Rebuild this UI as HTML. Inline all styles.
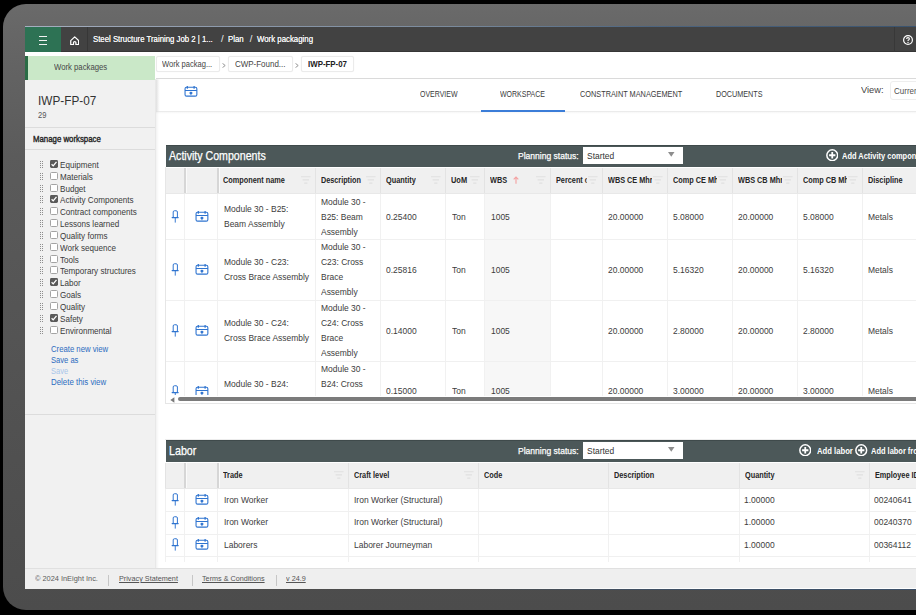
<!DOCTYPE html>
<html><head><meta charset="utf-8"><style>
html,body{margin:0;padding:0;width:916px;height:615px;overflow:hidden;background:#000;}
body{position:relative;font-family:"Liberation Sans", sans-serif;}
.t{position:absolute;white-space:nowrap;transform-origin:0 0;}
.b{position:absolute;}
</style></head><body>
<div class="b" style="left:0;top:0;width:916px;height:615px;overflow:hidden">
<div class="b" style="left:3.00px;top:4.00px;width:1000.00px;height:606.00px;border-radius:23px;background:linear-gradient(#6a6a6a 0%,#666666 5%,#5b5b5b 25%,#555555 50%,#505050 75%,#4c4c4c 100%);"></div>
<div class="b" style="left:25.00px;top:26.00px;width:900.00px;height:563.00px;background:#ffffff;"></div>
<div class="b" style="left:25.00px;top:26.00px;width:891.00px;height:1.00px;background:linear-gradient(90deg,#a6afc0 0%,#8f9cae 20%,#7a8a9c 48%,#4d6580 70%,#3a536e 100%);"></div>
<div class="b" style="left:25.00px;top:27.00px;width:900.00px;height:25.00px;background:#424242;"></div>
<div class="b" style="left:25.00px;top:51.00px;width:900.00px;height:1.00px;background:#363636;"></div>
<div class="b" style="left:25.00px;top:27.00px;width:36.20px;height:25.00px;background:#2d7254;"></div>
<div class="b" style="left:87.00px;top:27.00px;width:1.00px;height:25.00px;background:#373737;"></div>
<div class="b" style="left:894.30px;top:27.00px;width:1.00px;height:25.00px;background:#383838;"></div>
<div class="b" style="left:38.60px;top:36.10px;width:8.80px;height:1.30px;background:#f2f2f2;"></div>
<div class="b" style="left:38.60px;top:39.90px;width:8.80px;height:1.30px;background:#f2f2f2;"></div>
<div class="b" style="left:38.60px;top:43.70px;width:8.80px;height:1.30px;background:#f2f2f2;"></div>
<svg class="b" style="left:69.8px;top:35.6px" width="9.4" height="9.4" viewBox="0 0 9.4 9.4"><path d="M0.75 4.6 L4.7 0.85 L8.65 4.6 V8.7 H5.9 V6.6 Q5.9 5.6 4.7 5.6 Q3.5 5.6 3.5 6.6 V8.7 H0.75 Z" fill="none" stroke="#fff" stroke-width="1.25" stroke-linejoin="round"/></svg>
<svg class="b" style="left:902.5px;top:35.1px" width="10" height="10" viewBox="0 0 10 10"><circle cx="5" cy="5" r="4.4" fill="none" stroke="#fff" stroke-width="1.2"/><path d="M3.6 4.0 Q3.6 2.6 5.0 2.6 Q6.4 2.6 6.4 3.8 Q6.4 4.6 5.5 5.0 Q5.0 5.3 5.0 6.0" fill="none" stroke="#fff" stroke-width="1.1"/><circle cx="5" cy="7.4" r="0.65" fill="#fff"/></svg>
<div class="t" style="left:92.90px;top:33px;font-size:9.4px;line-height:12.22px;color:#f3f3f3;font-weight:normal;transform:scaleX(0.8306);text-shadow:0 0 0.3px #fff;">Steel Structure Training Job 2 | 1...</div>
<div class="t" style="left:221.00px;top:33px;font-size:9.4px;line-height:12.22px;color:#f3f3f3;font-weight:normal;">/</div>
<div class="t" style="left:227.80px;top:33px;font-size:9.4px;line-height:12.22px;color:#f3f3f3;font-weight:normal;transform:scaleX(0.8367);text-shadow:0 0 0.3px #fff;">Plan</div>
<div class="t" style="left:249.80px;top:33px;font-size:9.4px;line-height:12.22px;color:#f3f3f3;font-weight:normal;">/</div>
<div class="t" style="left:257.40px;top:33px;font-size:9.4px;line-height:12.22px;color:#f3f3f3;font-weight:normal;transform:scaleX(0.8352);text-shadow:0 0 0.3px #fff;">Work packaging</div>
<div class="b" style="left:25.00px;top:80.00px;width:130.00px;height:488.00px;background:#f1f1f1;"></div>
<div class="b" style="left:25.00px;top:55.80px;width:130.00px;height:24.20px;background:#cae8c8;"></div>
<div class="b" style="left:25.00px;top:55.80px;width:2.60px;height:24.20px;background:#2a6c45;"></div>
<div class="t" style="left:53.60px;top:62px;font-size:8.8px;line-height:11.44px;color:#474747;font-weight:normal;transform:scaleX(0.8798);">Work packages</div>
<div class="t" style="left:37.70px;top:93px;font-size:12.4px;line-height:16.12px;color:#333;font-weight:normal;transform:scaleX(0.9515);">IWP-FP-07</div>
<div class="t" style="left:37.80px;top:111px;font-size:8.2px;line-height:10.66px;color:#555;font-weight:normal;transform:scaleX(0.9200);">29</div>
<div class="b" style="left:25.00px;top:126.80px;width:130.00px;height:1.00px;background:#dcdcdc;"></div>
<div class="t" style="left:32.80px;top:134px;font-size:8.8px;line-height:11.44px;color:#222;font-weight:normal;transform:scaleX(0.8888);-webkit-text-stroke:0.35px #222;">Manage workspace</div>
<div class="b" style="left:25.00px;top:148.80px;width:130.00px;height:1.00px;background:#dcdcdc;"></div>
<div class="b" style="left:40.00px;top:161.00px;width:1.00px;height:1.00px;background:#8e8e8e;"></div>
<div class="b" style="left:42.00px;top:161.00px;width:1.00px;height:1.00px;background:#8e8e8e;"></div>
<div class="b" style="left:40.00px;top:163.00px;width:1.00px;height:1.00px;background:#8e8e8e;"></div>
<div class="b" style="left:42.00px;top:163.00px;width:1.00px;height:1.00px;background:#8e8e8e;"></div>
<div class="b" style="left:40.00px;top:165.00px;width:1.00px;height:1.00px;background:#8e8e8e;"></div>
<div class="b" style="left:42.00px;top:165.00px;width:1.00px;height:1.00px;background:#8e8e8e;"></div>
<div class="b" style="left:40.00px;top:167.00px;width:1.00px;height:1.00px;background:#8e8e8e;"></div>
<div class="b" style="left:42.00px;top:167.00px;width:1.00px;height:1.00px;background:#8e8e8e;"></div>
<svg class="b" style="left:49.6px;top:160.00px" width="8" height="8" viewBox="0 0 8 8"><rect x="0" y="0" width="8" height="8" rx="1.4" fill="#595959"/><path d="M1.6 4.3 L3.2 5.9 L6.5 1.9" fill="none" stroke="#fff" stroke-width="1.3"/></svg>
<div class="t" style="left:60.00px;top:160px;font-size:8.7px;line-height:11.31px;color:#3a3a3a;font-weight:normal;transform:scaleX(0.9300);">Equipment</div>
<div class="b" style="left:40.00px;top:172.83px;width:1.00px;height:1.00px;background:#8e8e8e;"></div>
<div class="b" style="left:42.00px;top:172.83px;width:1.00px;height:1.00px;background:#8e8e8e;"></div>
<div class="b" style="left:40.00px;top:174.83px;width:1.00px;height:1.00px;background:#8e8e8e;"></div>
<div class="b" style="left:42.00px;top:174.83px;width:1.00px;height:1.00px;background:#8e8e8e;"></div>
<div class="b" style="left:40.00px;top:176.83px;width:1.00px;height:1.00px;background:#8e8e8e;"></div>
<div class="b" style="left:42.00px;top:176.83px;width:1.00px;height:1.00px;background:#8e8e8e;"></div>
<div class="b" style="left:40.00px;top:178.83px;width:1.00px;height:1.00px;background:#8e8e8e;"></div>
<div class="b" style="left:42.00px;top:178.83px;width:1.00px;height:1.00px;background:#8e8e8e;"></div>
<div class="b" style="left:49.60px;top:171.83px;width:8.00px;height:8.00px;box-sizing:border-box;border:1px solid #a3a3a3;border-radius:1.5px;background:#fff;"></div>
<div class="t" style="left:60.00px;top:172px;font-size:8.7px;line-height:11.31px;color:#3a3a3a;font-weight:normal;transform:scaleX(0.9300);">Materials</div>
<div class="b" style="left:40.00px;top:184.66px;width:1.00px;height:1.00px;background:#8e8e8e;"></div>
<div class="b" style="left:42.00px;top:184.66px;width:1.00px;height:1.00px;background:#8e8e8e;"></div>
<div class="b" style="left:40.00px;top:186.66px;width:1.00px;height:1.00px;background:#8e8e8e;"></div>
<div class="b" style="left:42.00px;top:186.66px;width:1.00px;height:1.00px;background:#8e8e8e;"></div>
<div class="b" style="left:40.00px;top:188.66px;width:1.00px;height:1.00px;background:#8e8e8e;"></div>
<div class="b" style="left:42.00px;top:188.66px;width:1.00px;height:1.00px;background:#8e8e8e;"></div>
<div class="b" style="left:40.00px;top:190.66px;width:1.00px;height:1.00px;background:#8e8e8e;"></div>
<div class="b" style="left:42.00px;top:190.66px;width:1.00px;height:1.00px;background:#8e8e8e;"></div>
<div class="b" style="left:49.60px;top:183.66px;width:8.00px;height:8.00px;box-sizing:border-box;border:1px solid #a3a3a3;border-radius:1.5px;background:#fff;"></div>
<div class="t" style="left:60.00px;top:184px;font-size:8.7px;line-height:11.31px;color:#3a3a3a;font-weight:normal;transform:scaleX(0.9300);">Budget</div>
<div class="b" style="left:40.00px;top:196.49px;width:1.00px;height:1.00px;background:#8e8e8e;"></div>
<div class="b" style="left:42.00px;top:196.49px;width:1.00px;height:1.00px;background:#8e8e8e;"></div>
<div class="b" style="left:40.00px;top:198.49px;width:1.00px;height:1.00px;background:#8e8e8e;"></div>
<div class="b" style="left:42.00px;top:198.49px;width:1.00px;height:1.00px;background:#8e8e8e;"></div>
<div class="b" style="left:40.00px;top:200.49px;width:1.00px;height:1.00px;background:#8e8e8e;"></div>
<div class="b" style="left:42.00px;top:200.49px;width:1.00px;height:1.00px;background:#8e8e8e;"></div>
<div class="b" style="left:40.00px;top:202.49px;width:1.00px;height:1.00px;background:#8e8e8e;"></div>
<div class="b" style="left:42.00px;top:202.49px;width:1.00px;height:1.00px;background:#8e8e8e;"></div>
<svg class="b" style="left:49.6px;top:195.49px" width="8" height="8" viewBox="0 0 8 8"><rect x="0" y="0" width="8" height="8" rx="1.4" fill="#595959"/><path d="M1.6 4.3 L3.2 5.9 L6.5 1.9" fill="none" stroke="#fff" stroke-width="1.3"/></svg>
<div class="t" style="left:60.00px;top:195px;font-size:8.7px;line-height:11.31px;color:#3a3a3a;font-weight:normal;transform:scaleX(0.9300);">Activity Components</div>
<div class="b" style="left:40.00px;top:208.32px;width:1.00px;height:1.00px;background:#8e8e8e;"></div>
<div class="b" style="left:42.00px;top:208.32px;width:1.00px;height:1.00px;background:#8e8e8e;"></div>
<div class="b" style="left:40.00px;top:210.32px;width:1.00px;height:1.00px;background:#8e8e8e;"></div>
<div class="b" style="left:42.00px;top:210.32px;width:1.00px;height:1.00px;background:#8e8e8e;"></div>
<div class="b" style="left:40.00px;top:212.32px;width:1.00px;height:1.00px;background:#8e8e8e;"></div>
<div class="b" style="left:42.00px;top:212.32px;width:1.00px;height:1.00px;background:#8e8e8e;"></div>
<div class="b" style="left:40.00px;top:214.32px;width:1.00px;height:1.00px;background:#8e8e8e;"></div>
<div class="b" style="left:42.00px;top:214.32px;width:1.00px;height:1.00px;background:#8e8e8e;"></div>
<div class="b" style="left:49.60px;top:207.32px;width:8.00px;height:8.00px;box-sizing:border-box;border:1px solid #a3a3a3;border-radius:1.5px;background:#fff;"></div>
<div class="t" style="left:60.00px;top:207px;font-size:8.7px;line-height:11.31px;color:#3a3a3a;font-weight:normal;transform:scaleX(0.9300);">Contract components</div>
<div class="b" style="left:40.00px;top:220.15px;width:1.00px;height:1.00px;background:#8e8e8e;"></div>
<div class="b" style="left:42.00px;top:220.15px;width:1.00px;height:1.00px;background:#8e8e8e;"></div>
<div class="b" style="left:40.00px;top:222.15px;width:1.00px;height:1.00px;background:#8e8e8e;"></div>
<div class="b" style="left:42.00px;top:222.15px;width:1.00px;height:1.00px;background:#8e8e8e;"></div>
<div class="b" style="left:40.00px;top:224.15px;width:1.00px;height:1.00px;background:#8e8e8e;"></div>
<div class="b" style="left:42.00px;top:224.15px;width:1.00px;height:1.00px;background:#8e8e8e;"></div>
<div class="b" style="left:40.00px;top:226.15px;width:1.00px;height:1.00px;background:#8e8e8e;"></div>
<div class="b" style="left:42.00px;top:226.15px;width:1.00px;height:1.00px;background:#8e8e8e;"></div>
<div class="b" style="left:49.60px;top:219.15px;width:8.00px;height:8.00px;box-sizing:border-box;border:1px solid #a3a3a3;border-radius:1.5px;background:#fff;"></div>
<div class="t" style="left:60.00px;top:219px;font-size:8.7px;line-height:11.31px;color:#3a3a3a;font-weight:normal;transform:scaleX(0.9300);">Lessons learned</div>
<div class="b" style="left:40.00px;top:231.98px;width:1.00px;height:1.00px;background:#8e8e8e;"></div>
<div class="b" style="left:42.00px;top:231.98px;width:1.00px;height:1.00px;background:#8e8e8e;"></div>
<div class="b" style="left:40.00px;top:233.98px;width:1.00px;height:1.00px;background:#8e8e8e;"></div>
<div class="b" style="left:42.00px;top:233.98px;width:1.00px;height:1.00px;background:#8e8e8e;"></div>
<div class="b" style="left:40.00px;top:235.98px;width:1.00px;height:1.00px;background:#8e8e8e;"></div>
<div class="b" style="left:42.00px;top:235.98px;width:1.00px;height:1.00px;background:#8e8e8e;"></div>
<div class="b" style="left:40.00px;top:237.98px;width:1.00px;height:1.00px;background:#8e8e8e;"></div>
<div class="b" style="left:42.00px;top:237.98px;width:1.00px;height:1.00px;background:#8e8e8e;"></div>
<div class="b" style="left:49.60px;top:230.98px;width:8.00px;height:8.00px;box-sizing:border-box;border:1px solid #a3a3a3;border-radius:1.5px;background:#fff;"></div>
<div class="t" style="left:60.00px;top:231px;font-size:8.7px;line-height:11.31px;color:#3a3a3a;font-weight:normal;transform:scaleX(0.9300);">Quality forms</div>
<div class="b" style="left:40.00px;top:243.81px;width:1.00px;height:1.00px;background:#8e8e8e;"></div>
<div class="b" style="left:42.00px;top:243.81px;width:1.00px;height:1.00px;background:#8e8e8e;"></div>
<div class="b" style="left:40.00px;top:245.81px;width:1.00px;height:1.00px;background:#8e8e8e;"></div>
<div class="b" style="left:42.00px;top:245.81px;width:1.00px;height:1.00px;background:#8e8e8e;"></div>
<div class="b" style="left:40.00px;top:247.81px;width:1.00px;height:1.00px;background:#8e8e8e;"></div>
<div class="b" style="left:42.00px;top:247.81px;width:1.00px;height:1.00px;background:#8e8e8e;"></div>
<div class="b" style="left:40.00px;top:249.81px;width:1.00px;height:1.00px;background:#8e8e8e;"></div>
<div class="b" style="left:42.00px;top:249.81px;width:1.00px;height:1.00px;background:#8e8e8e;"></div>
<div class="b" style="left:49.60px;top:242.81px;width:8.00px;height:8.00px;box-sizing:border-box;border:1px solid #a3a3a3;border-radius:1.5px;background:#fff;"></div>
<div class="t" style="left:60.00px;top:243px;font-size:8.7px;line-height:11.31px;color:#3a3a3a;font-weight:normal;transform:scaleX(0.9300);">Work sequence</div>
<div class="b" style="left:40.00px;top:255.64px;width:1.00px;height:1.00px;background:#8e8e8e;"></div>
<div class="b" style="left:42.00px;top:255.64px;width:1.00px;height:1.00px;background:#8e8e8e;"></div>
<div class="b" style="left:40.00px;top:257.64px;width:1.00px;height:1.00px;background:#8e8e8e;"></div>
<div class="b" style="left:42.00px;top:257.64px;width:1.00px;height:1.00px;background:#8e8e8e;"></div>
<div class="b" style="left:40.00px;top:259.64px;width:1.00px;height:1.00px;background:#8e8e8e;"></div>
<div class="b" style="left:42.00px;top:259.64px;width:1.00px;height:1.00px;background:#8e8e8e;"></div>
<div class="b" style="left:40.00px;top:261.64px;width:1.00px;height:1.00px;background:#8e8e8e;"></div>
<div class="b" style="left:42.00px;top:261.64px;width:1.00px;height:1.00px;background:#8e8e8e;"></div>
<div class="b" style="left:49.60px;top:254.64px;width:8.00px;height:8.00px;box-sizing:border-box;border:1px solid #a3a3a3;border-radius:1.5px;background:#fff;"></div>
<div class="t" style="left:60.00px;top:255px;font-size:8.7px;line-height:11.31px;color:#3a3a3a;font-weight:normal;transform:scaleX(0.9300);">Tools</div>
<div class="b" style="left:40.00px;top:267.47px;width:1.00px;height:1.00px;background:#8e8e8e;"></div>
<div class="b" style="left:42.00px;top:267.47px;width:1.00px;height:1.00px;background:#8e8e8e;"></div>
<div class="b" style="left:40.00px;top:269.47px;width:1.00px;height:1.00px;background:#8e8e8e;"></div>
<div class="b" style="left:42.00px;top:269.47px;width:1.00px;height:1.00px;background:#8e8e8e;"></div>
<div class="b" style="left:40.00px;top:271.47px;width:1.00px;height:1.00px;background:#8e8e8e;"></div>
<div class="b" style="left:42.00px;top:271.47px;width:1.00px;height:1.00px;background:#8e8e8e;"></div>
<div class="b" style="left:40.00px;top:273.47px;width:1.00px;height:1.00px;background:#8e8e8e;"></div>
<div class="b" style="left:42.00px;top:273.47px;width:1.00px;height:1.00px;background:#8e8e8e;"></div>
<div class="b" style="left:49.60px;top:266.47px;width:8.00px;height:8.00px;box-sizing:border-box;border:1px solid #a3a3a3;border-radius:1.5px;background:#fff;"></div>
<div class="t" style="left:60.00px;top:266px;font-size:8.7px;line-height:11.31px;color:#3a3a3a;font-weight:normal;transform:scaleX(0.9300);">Temporary structures</div>
<div class="b" style="left:40.00px;top:279.30px;width:1.00px;height:1.00px;background:#8e8e8e;"></div>
<div class="b" style="left:42.00px;top:279.30px;width:1.00px;height:1.00px;background:#8e8e8e;"></div>
<div class="b" style="left:40.00px;top:281.30px;width:1.00px;height:1.00px;background:#8e8e8e;"></div>
<div class="b" style="left:42.00px;top:281.30px;width:1.00px;height:1.00px;background:#8e8e8e;"></div>
<div class="b" style="left:40.00px;top:283.30px;width:1.00px;height:1.00px;background:#8e8e8e;"></div>
<div class="b" style="left:42.00px;top:283.30px;width:1.00px;height:1.00px;background:#8e8e8e;"></div>
<div class="b" style="left:40.00px;top:285.30px;width:1.00px;height:1.00px;background:#8e8e8e;"></div>
<div class="b" style="left:42.00px;top:285.30px;width:1.00px;height:1.00px;background:#8e8e8e;"></div>
<svg class="b" style="left:49.6px;top:278.30px" width="8" height="8" viewBox="0 0 8 8"><rect x="0" y="0" width="8" height="8" rx="1.4" fill="#595959"/><path d="M1.6 4.3 L3.2 5.9 L6.5 1.9" fill="none" stroke="#fff" stroke-width="1.3"/></svg>
<div class="t" style="left:60.00px;top:278px;font-size:8.7px;line-height:11.31px;color:#3a3a3a;font-weight:normal;transform:scaleX(0.9300);">Labor</div>
<div class="b" style="left:40.00px;top:291.13px;width:1.00px;height:1.00px;background:#8e8e8e;"></div>
<div class="b" style="left:42.00px;top:291.13px;width:1.00px;height:1.00px;background:#8e8e8e;"></div>
<div class="b" style="left:40.00px;top:293.13px;width:1.00px;height:1.00px;background:#8e8e8e;"></div>
<div class="b" style="left:42.00px;top:293.13px;width:1.00px;height:1.00px;background:#8e8e8e;"></div>
<div class="b" style="left:40.00px;top:295.13px;width:1.00px;height:1.00px;background:#8e8e8e;"></div>
<div class="b" style="left:42.00px;top:295.13px;width:1.00px;height:1.00px;background:#8e8e8e;"></div>
<div class="b" style="left:40.00px;top:297.13px;width:1.00px;height:1.00px;background:#8e8e8e;"></div>
<div class="b" style="left:42.00px;top:297.13px;width:1.00px;height:1.00px;background:#8e8e8e;"></div>
<div class="b" style="left:49.60px;top:290.13px;width:8.00px;height:8.00px;box-sizing:border-box;border:1px solid #a3a3a3;border-radius:1.5px;background:#fff;"></div>
<div class="t" style="left:60.00px;top:290px;font-size:8.7px;line-height:11.31px;color:#3a3a3a;font-weight:normal;transform:scaleX(0.9300);">Goals</div>
<div class="b" style="left:40.00px;top:302.96px;width:1.00px;height:1.00px;background:#8e8e8e;"></div>
<div class="b" style="left:42.00px;top:302.96px;width:1.00px;height:1.00px;background:#8e8e8e;"></div>
<div class="b" style="left:40.00px;top:304.96px;width:1.00px;height:1.00px;background:#8e8e8e;"></div>
<div class="b" style="left:42.00px;top:304.96px;width:1.00px;height:1.00px;background:#8e8e8e;"></div>
<div class="b" style="left:40.00px;top:306.96px;width:1.00px;height:1.00px;background:#8e8e8e;"></div>
<div class="b" style="left:42.00px;top:306.96px;width:1.00px;height:1.00px;background:#8e8e8e;"></div>
<div class="b" style="left:40.00px;top:308.96px;width:1.00px;height:1.00px;background:#8e8e8e;"></div>
<div class="b" style="left:42.00px;top:308.96px;width:1.00px;height:1.00px;background:#8e8e8e;"></div>
<div class="b" style="left:49.60px;top:301.96px;width:8.00px;height:8.00px;box-sizing:border-box;border:1px solid #a3a3a3;border-radius:1.5px;background:#fff;"></div>
<div class="t" style="left:60.00px;top:302px;font-size:8.7px;line-height:11.31px;color:#3a3a3a;font-weight:normal;transform:scaleX(0.9300);">Quality</div>
<div class="b" style="left:40.00px;top:314.79px;width:1.00px;height:1.00px;background:#8e8e8e;"></div>
<div class="b" style="left:42.00px;top:314.79px;width:1.00px;height:1.00px;background:#8e8e8e;"></div>
<div class="b" style="left:40.00px;top:316.79px;width:1.00px;height:1.00px;background:#8e8e8e;"></div>
<div class="b" style="left:42.00px;top:316.79px;width:1.00px;height:1.00px;background:#8e8e8e;"></div>
<div class="b" style="left:40.00px;top:318.79px;width:1.00px;height:1.00px;background:#8e8e8e;"></div>
<div class="b" style="left:42.00px;top:318.79px;width:1.00px;height:1.00px;background:#8e8e8e;"></div>
<div class="b" style="left:40.00px;top:320.79px;width:1.00px;height:1.00px;background:#8e8e8e;"></div>
<div class="b" style="left:42.00px;top:320.79px;width:1.00px;height:1.00px;background:#8e8e8e;"></div>
<svg class="b" style="left:49.6px;top:313.79px" width="8" height="8" viewBox="0 0 8 8"><rect x="0" y="0" width="8" height="8" rx="1.4" fill="#595959"/><path d="M1.6 4.3 L3.2 5.9 L6.5 1.9" fill="none" stroke="#fff" stroke-width="1.3"/></svg>
<div class="t" style="left:60.00px;top:314px;font-size:8.7px;line-height:11.31px;color:#3a3a3a;font-weight:normal;transform:scaleX(0.9300);">Safety</div>
<div class="b" style="left:40.00px;top:326.62px;width:1.00px;height:1.00px;background:#8e8e8e;"></div>
<div class="b" style="left:42.00px;top:326.62px;width:1.00px;height:1.00px;background:#8e8e8e;"></div>
<div class="b" style="left:40.00px;top:328.62px;width:1.00px;height:1.00px;background:#8e8e8e;"></div>
<div class="b" style="left:42.00px;top:328.62px;width:1.00px;height:1.00px;background:#8e8e8e;"></div>
<div class="b" style="left:40.00px;top:330.62px;width:1.00px;height:1.00px;background:#8e8e8e;"></div>
<div class="b" style="left:42.00px;top:330.62px;width:1.00px;height:1.00px;background:#8e8e8e;"></div>
<div class="b" style="left:40.00px;top:332.62px;width:1.00px;height:1.00px;background:#8e8e8e;"></div>
<div class="b" style="left:42.00px;top:332.62px;width:1.00px;height:1.00px;background:#8e8e8e;"></div>
<div class="b" style="left:49.60px;top:325.62px;width:8.00px;height:8.00px;box-sizing:border-box;border:1px solid #a3a3a3;border-radius:1.5px;background:#fff;"></div>
<div class="t" style="left:60.00px;top:326px;font-size:8.7px;line-height:11.31px;color:#3a3a3a;font-weight:normal;transform:scaleX(0.9300);">Environmental</div>
<div class="t" style="left:50.60px;top:344px;font-size:8.3px;line-height:10.79px;color:#2c6cc0;font-weight:normal;transform:scaleX(0.9326);">Create new view</div>
<div class="t" style="left:50.60px;top:355px;font-size:8.3px;line-height:10.79px;color:#2c6cc0;font-weight:normal;transform:scaleX(0.9140);">Save as</div>
<div class="t" style="left:50.60px;top:366px;font-size:8.3px;line-height:10.79px;color:#a8c6ea;font-weight:normal;transform:scaleX(0.9042);">Save</div>
<div class="t" style="left:50.60px;top:377px;font-size:8.3px;line-height:10.79px;color:#2c6cc0;font-weight:normal;transform:scaleX(0.9500);">Delete this view</div>
<div class="b" style="left:25.00px;top:413.80px;width:130.00px;height:1.00px;background:#dcdcdc;"></div>
<div class="b" style="left:155.60px;top:56.40px;width:64.10px;height:15.60px;box-sizing:border-box;border:1px solid #ebebeb;border-radius:2px;background:#fff;box-shadow:0 0 1px rgba(0,0,0,0.08);"></div>
<div class="b" style="left:228.40px;top:56.40px;width:64.30px;height:15.60px;box-sizing:border-box;border:1px solid #ebebeb;border-radius:2px;background:#fff;box-shadow:0 0 1px rgba(0,0,0,0.08);"></div>
<div class="b" style="left:300.80px;top:56.40px;width:52.80px;height:15.60px;box-sizing:border-box;border:1px solid #ebebeb;border-radius:2px;background:#fff;box-shadow:0 0 1px rgba(0,0,0,0.08);"></div>
<div class="t" style="left:162.10px;top:59px;font-size:8.8px;line-height:11.44px;color:#444;font-weight:normal;transform:scaleX(0.8580);">Work packag...</div>
<div class="t" style="left:235.20px;top:59px;font-size:8.8px;line-height:11.44px;color:#444;font-weight:normal;transform:scaleX(0.9062);">CWP-Found...</div>
<div class="t" style="left:307.50px;top:59px;font-size:8.6px;line-height:11.18px;color:#222;font-weight:bold;transform:scaleX(0.9178);">IWP-FP-07</div>
<svg class="b" style="left:222.10px;top:63px" width="4" height="5" viewBox="0 0 4 5"><path d="M0.5 0.4 L3.2 2.5 L0.5 4.6" fill="none" stroke="#8a8a8a" stroke-width="0.9"/></svg>
<svg class="b" style="left:294.90px;top:63px" width="4" height="5" viewBox="0 0 4 5"><path d="M0.5 0.4 L3.2 2.5 L0.5 4.6" fill="none" stroke="#8a8a8a" stroke-width="0.9"/></svg>
<div class="b" style="left:156.00px;top:78.20px;width:800.00px;height:1.00px;background:#dadada;"></div>
<div class="b" style="left:156.00px;top:111.00px;width:800.00px;height:1.00px;background:#ebebeb;"></div>
<div class="b" style="left:156.00px;top:112.00px;width:800.00px;height:2.00px;background:linear-gradient(#f6f6f6,#fff);"></div>
<div class="b" style="left:155.00px;top:78.50px;width:5.00px;height:32.50px;background:linear-gradient(90deg,#e6e6e6,#fff);"></div>
<svg class="b" style="left:184.20px;top:86.00px" width="14" height="11" viewBox="0 0 14 11"><rect x="1.05" y="1.25" width="11.8" height="8.9" rx="1.5" fill="none" stroke="#2f74d0" stroke-width="1.1"/><path d="M1.0 4.5 H12.9" stroke="#2f74d0" stroke-width="1.0"/><path d="M3.3 0.5 V2.2 M10.1 0.5 V2.2" stroke="#2f74d0" stroke-width="1.3" stroke-linecap="round"/><path d="M5.0 7.0 L6.95 5.6 L8.9 7.0 L6.95 8.4 Z" fill="#2f74d0"/><path d="M6.95 6 V9.2" stroke="#2f74d0" stroke-width="0.8"/></svg>
<div class="t" style="left:419.50px;top:89px;font-size:8.4px;line-height:10.92px;color:#3a3a3a;font-weight:normal;transform:scaleX(0.8336);">OVERVIEW</div>
<div class="t" style="left:500.00px;top:89px;font-size:8.4px;line-height:10.92px;color:#3a3a3a;font-weight:normal;transform:scaleX(0.8361);">WORKSPACE</div>
<div class="t" style="left:579.60px;top:89px;font-size:8.4px;line-height:10.92px;color:#3a3a3a;font-weight:normal;transform:scaleX(0.8759);">CONSTRAINT MANAGEMENT</div>
<div class="t" style="left:715.80px;top:89px;font-size:8.4px;line-height:10.92px;color:#3a3a3a;font-weight:normal;transform:scaleX(0.8616);">DOCUMENTS</div>
<div class="b" style="left:481.00px;top:110.00px;width:84.00px;height:2.00px;background:#3b7dd8;"></div>
<div class="t" style="left:860.50px;top:84px;font-size:9.7px;line-height:12.61px;color:#444;font-weight:normal;transform:scaleX(0.9569);">View:</div>
<div class="b" style="left:889.60px;top:81.40px;width:40.00px;height:18.20px;box-sizing:border-box;border:1px solid #eeeeee;border-radius:3px;background:#fff;"></div>
<div class="t" style="left:893.70px;top:86px;font-size:8.7px;line-height:11.31px;color:#505050;font-weight:normal;transform:scaleX(0.9200);">Current</div>
<div class="b" style="left:166.00px;top:145.20px;width:800.00px;height:21.65px;background:#4c5859;"></div>
<div class="b" style="left:166.00px;top:145.00px;width:800.00px;height:1.00px;background:#3f4a4b;"></div>
<div class="t" style="left:169.40px;top:149px;font-size:11.9px;line-height:15.47px;color:#fff;font-weight:normal;transform:scaleX(0.8922);-webkit-text-stroke:0.25px #fff;">Activity Components</div>
<div class="t" style="left:517.90px;top:150px;font-size:9.9px;line-height:12.87px;color:#fff;font-weight:normal;transform:scaleX(0.8638);-webkit-text-stroke:0.25px #fff;">Planning status:</div>
<div class="b" style="left:583.00px;top:147.40px;width:100.00px;height:16.30px;background:#fff;"></div>
<div class="t" style="left:586.90px;top:150px;font-size:9.4px;line-height:12.22px;color:#333;font-weight:normal;transform:scaleX(0.9000);">Started</div>
<svg class="b" style="left:667.8px;top:151.9px" width="7" height="5" viewBox="0 0 7 5"><path d="M0 0 H6.5 L3.25 4.7 Z" fill="#8d8d8d"/></svg>
<svg class="b" style="left:825.50px;top:148.50px" width="12.5" height="12.5" viewBox="0 0 12.5 12.5"><circle cx="6.25" cy="6.25" r="5.4" fill="none" stroke="#fff" stroke-width="1.5"/><path d="M6.25 3.1 V9.4 M3.1 6.25 H9.4" stroke="#fff" stroke-width="1.8"/></svg>
<div class="t" style="left:841.70px;top:151px;font-size:8.9px;line-height:11.57px;color:#fff;font-weight:bold;transform:scaleX(0.8400);">Add Activity components</div>
<div class="b" style="left:165.00px;top:167.60px;width:800.00px;height:25.40px;background:#f0f0f0;"></div>
<div class="b" style="left:165.00px;top:193.00px;width:800.00px;height:1.00px;background:#e8e8e8;"></div>
<div class="b" style="left:485.00px;top:194.00px;width:65.00px;height:202.00px;background:#f7f7f7;"></div>
<div class="b" style="left:165.00px;top:194.00px;width:1.00px;height:202.00px;background:#f1f1f1;"></div>
<div class="b" style="left:184.00px;top:194.00px;width:1.00px;height:202.00px;background:#f1f1f1;"></div>
<div class="b" style="left:217.00px;top:194.00px;width:1.00px;height:202.00px;background:#f1f1f1;"></div>
<div class="b" style="left:315.00px;top:194.00px;width:1.00px;height:202.00px;background:#f1f1f1;"></div>
<div class="b" style="left:380.00px;top:194.00px;width:1.00px;height:202.00px;background:#f1f1f1;"></div>
<div class="b" style="left:445.00px;top:194.00px;width:1.00px;height:202.00px;background:#f1f1f1;"></div>
<div class="b" style="left:484.00px;top:194.00px;width:1.00px;height:202.00px;background:#f1f1f1;"></div>
<div class="b" style="left:550.00px;top:194.00px;width:1.00px;height:202.00px;background:#f1f1f1;"></div>
<div class="b" style="left:602.00px;top:194.00px;width:1.00px;height:202.00px;background:#f1f1f1;"></div>
<div class="b" style="left:667.00px;top:194.00px;width:1.00px;height:202.00px;background:#f1f1f1;"></div>
<div class="b" style="left:732.00px;top:194.00px;width:1.00px;height:202.00px;background:#f1f1f1;"></div>
<div class="b" style="left:797.00px;top:194.00px;width:1.00px;height:202.00px;background:#f1f1f1;"></div>
<div class="b" style="left:862.00px;top:194.00px;width:1.00px;height:202.00px;background:#f1f1f1;"></div>
<div class="b" style="left:165.00px;top:239.00px;width:800.00px;height:1.00px;background:#f0f0f0;"></div>
<div class="b" style="left:165.00px;top:300.00px;width:800.00px;height:1.00px;background:#f0f0f0;"></div>
<div class="b" style="left:165.00px;top:361.00px;width:800.00px;height:1.00px;background:#f0f0f0;"></div>
<div class="b" style="left:165.00px;top:167.60px;width:1.00px;height:25.40px;background:#e3e3e3;"></div>
<div class="b" style="left:184.00px;top:167.60px;width:2.00px;height:25.40px;background:#d6d6d6;"></div>
<div class="b" style="left:186.00px;top:167.60px;width:1.00px;height:25.40px;background:#fafafa;"></div>
<div class="b" style="left:217.00px;top:167.60px;width:2.00px;height:25.40px;background:#d6d6d6;"></div>
<div class="b" style="left:219.00px;top:167.60px;width:1.00px;height:25.40px;background:#fafafa;"></div>
<div class="b" style="left:315.00px;top:167.60px;width:1.00px;height:25.40px;background:#e3e3e3;"></div>
<div class="b" style="left:380.00px;top:167.60px;width:1.00px;height:25.40px;background:#e3e3e3;"></div>
<div class="b" style="left:445.00px;top:167.60px;width:1.00px;height:25.40px;background:#e3e3e3;"></div>
<div class="b" style="left:484.00px;top:167.60px;width:1.00px;height:25.40px;background:#e3e3e3;"></div>
<div class="b" style="left:550.00px;top:167.60px;width:1.00px;height:25.40px;background:#e3e3e3;"></div>
<div class="b" style="left:602.00px;top:167.60px;width:1.00px;height:25.40px;background:#e3e3e3;"></div>
<div class="b" style="left:667.00px;top:167.60px;width:1.00px;height:25.40px;background:#e3e3e3;"></div>
<div class="b" style="left:732.00px;top:167.60px;width:1.00px;height:25.40px;background:#e3e3e3;"></div>
<div class="b" style="left:797.00px;top:167.60px;width:1.00px;height:25.40px;background:#e3e3e3;"></div>
<div class="b" style="left:862.00px;top:167.60px;width:1.00px;height:25.40px;background:#e3e3e3;"></div>
<div class="t" style="left:222.90px;top:175px;font-size:8.8px;line-height:11.44px;color:#262626;font-weight:bold;transform:scaleX(0.8319);">Component name</div>
<svg class="b" style="left:300.80px;top:176.20px" width="10" height="8" viewBox="0 0 10 8"><path d="M0 0.7 H9.6 M1.6 3.9 H8 M3.2 7.1 H6.4" stroke="#e0e0e0" stroke-width="1.1"/></svg>
<div class="t" style="left:320.90px;top:175px;font-size:8.8px;line-height:11.44px;color:#262626;font-weight:bold;transform:scaleX(0.8245);">Description</div>
<svg class="b" style="left:365.80px;top:176.20px" width="10" height="8" viewBox="0 0 10 8"><path d="M0 0.7 H9.6 M1.6 3.9 H8 M3.2 7.1 H6.4" stroke="#e0e0e0" stroke-width="1.1"/></svg>
<div class="t" style="left:385.90px;top:175px;font-size:8.8px;line-height:11.44px;color:#262626;font-weight:bold;transform:scaleX(0.8325);">Quantity</div>
<svg class="b" style="left:430.80px;top:176.20px" width="10" height="8" viewBox="0 0 10 8"><path d="M0 0.7 H9.6 M1.6 3.9 H8 M3.2 7.1 H6.4" stroke="#e0e0e0" stroke-width="1.1"/></svg>
<div class="t" style="left:450.90px;top:175px;font-size:8.8px;line-height:11.44px;color:#262626;font-weight:bold;transform:scaleX(0.8450);">UoM</div>
<svg class="b" style="left:469.80px;top:176.20px" width="10" height="8" viewBox="0 0 10 8"><path d="M0 0.7 H9.6 M1.6 3.9 H8 M3.2 7.1 H6.4" stroke="#e0e0e0" stroke-width="1.1"/></svg>
<div class="t" style="left:489.90px;top:175px;font-size:8.8px;line-height:11.44px;color:#262626;font-weight:bold;transform:scaleX(0.8300);width:54.2px;overflow:hidden;">WBS</div>
<svg class="b" style="left:535.80px;top:176.20px" width="10" height="8" viewBox="0 0 10 8"><path d="M0 0.7 H9.6 M1.6 3.9 H8 M3.2 7.1 H6.4" stroke="#e0e0e0" stroke-width="1.1"/></svg>
<div class="t" style="left:555.90px;top:175px;font-size:8.8px;line-height:11.44px;color:#262626;font-weight:bold;transform:scaleX(0.8300);width:37.3px;overflow:hidden;">Percent complete</div>
<svg class="b" style="left:587.80px;top:176.20px" width="10" height="8" viewBox="0 0 10 8"><path d="M0 0.7 H9.6 M1.6 3.9 H8 M3.2 7.1 H6.4" stroke="#e0e0e0" stroke-width="1.1"/></svg>
<div class="t" style="left:607.90px;top:175px;font-size:8.8px;line-height:11.44px;color:#262626;font-weight:bold;transform:scaleX(0.8300);width:53.0px;overflow:hidden;">WBS CE Mhr</div>
<svg class="b" style="left:652.80px;top:176.20px" width="10" height="8" viewBox="0 0 10 8"><path d="M0 0.7 H9.6 M1.6 3.9 H8 M3.2 7.1 H6.4" stroke="#e0e0e0" stroke-width="1.1"/></svg>
<div class="t" style="left:672.90px;top:175px;font-size:8.8px;line-height:11.44px;color:#262626;font-weight:bold;transform:scaleX(0.8300);width:53.0px;overflow:hidden;">Comp CE Mhr</div>
<svg class="b" style="left:717.80px;top:176.20px" width="10" height="8" viewBox="0 0 10 8"><path d="M0 0.7 H9.6 M1.6 3.9 H8 M3.2 7.1 H6.4" stroke="#e0e0e0" stroke-width="1.1"/></svg>
<div class="t" style="left:737.90px;top:175px;font-size:8.8px;line-height:11.44px;color:#262626;font-weight:bold;transform:scaleX(0.8300);width:53.0px;overflow:hidden;">WBS CB Mhr</div>
<svg class="b" style="left:782.80px;top:176.20px" width="10" height="8" viewBox="0 0 10 8"><path d="M0 0.7 H9.6 M1.6 3.9 H8 M3.2 7.1 H6.4" stroke="#e0e0e0" stroke-width="1.1"/></svg>
<div class="t" style="left:802.90px;top:175px;font-size:8.8px;line-height:11.44px;color:#262626;font-weight:bold;transform:scaleX(0.8300);width:53.0px;overflow:hidden;">Comp CB Mhr</div>
<svg class="b" style="left:847.80px;top:176.20px" width="10" height="8" viewBox="0 0 10 8"><path d="M0 0.7 H9.6 M1.6 3.9 H8 M3.2 7.1 H6.4" stroke="#e0e0e0" stroke-width="1.1"/></svg>
<div class="t" style="left:867.90px;top:175px;font-size:8.8px;line-height:11.44px;color:#262626;font-weight:bold;transform:scaleX(0.8300);width:92.8px;overflow:hidden;">Discipline</div>
<svg class="b" style="left:945.80px;top:176.20px" width="10" height="8" viewBox="0 0 10 8"><path d="M0 0.7 H9.6 M1.6 3.9 H8 M3.2 7.1 H6.4" stroke="#e0e0e0" stroke-width="1.1"/></svg>
<svg class="b" style="left:513.2px;top:176px" width="6" height="8" viewBox="0 0 6 8"><path d="M3 7.8 V1.2 M0.7 3.4 L3 1.1 L5.3 3.4" fill="none" stroke="#f4a0a0" stroke-width="1.1"/></svg>
<div class="b" style="left:165px;top:194px;width:760px;height:201px;overflow:hidden">
<div class="t" style="left:58.90px;top:9px;font-size:9.3px;line-height:12.09px;color:#3c3c3c;font-weight:normal;transform:scaleX(0.9100);">Module 30 - B25:</div>
<div class="t" style="left:58.90px;top:24px;font-size:9.3px;line-height:12.09px;color:#3c3c3c;font-weight:normal;transform:scaleX(0.9100);">Beam Assembly</div>
<div class="t" style="left:156.10px;top:2px;font-size:9.3px;line-height:12.09px;color:#3c3c3c;font-weight:normal;transform:scaleX(0.9100);">Module 30 -</div>
<div class="t" style="left:156.10px;top:17px;font-size:9.3px;line-height:12.09px;color:#3c3c3c;font-weight:normal;transform:scaleX(0.9100);">B25: Beam</div>
<div class="t" style="left:156.10px;top:32px;font-size:9.3px;line-height:12.09px;color:#3c3c3c;font-weight:normal;transform:scaleX(0.9100);">Assembly</div>
<div class="t" style="left:221.30px;top:17px;font-size:9.3px;line-height:12.09px;color:#3c3c3c;font-weight:normal;transform:scaleX(0.9100);">0.25400</div>
<div class="t" style="left:286.60px;top:17px;font-size:9.3px;line-height:12.09px;color:#3c3c3c;font-weight:normal;transform:scaleX(0.9100);">Ton</div>
<div class="t" style="left:326.00px;top:17px;font-size:9.3px;line-height:12.09px;color:#3c3c3c;font-weight:normal;transform:scaleX(0.9100);">1005</div>
<div class="t" style="left:442.60px;top:17px;font-size:9.3px;line-height:12.09px;color:#3c3c3c;font-weight:normal;transform:scaleX(0.9100);">20.00000</div>
<div class="t" style="left:507.60px;top:17px;font-size:9.3px;line-height:12.09px;color:#3c3c3c;font-weight:normal;transform:scaleX(0.9100);">5.08000</div>
<div class="t" style="left:573.20px;top:17px;font-size:9.3px;line-height:12.09px;color:#3c3c3c;font-weight:normal;transform:scaleX(0.9100);">20.00000</div>
<div class="t" style="left:637.60px;top:17px;font-size:9.3px;line-height:12.09px;color:#3c3c3c;font-weight:normal;transform:scaleX(0.9100);">5.08000</div>
<div class="t" style="left:703.20px;top:17px;font-size:9.3px;line-height:12.09px;color:#3c3c3c;font-weight:normal;transform:scaleX(0.9100);">Metals</div>
<div class="b" style="left:6.20px;top:15.60px">
<svg class="b" style="left:0.00px;top:0.00px" width="9" height="13" viewBox="0 0 9 13"><path d="M2.2 7.6 V2.0 Q2.2 0.75 3.45 0.75 H5.15 Q6.4 0.75 6.4 2.0 V7.6" fill="none" stroke="#2f74d0" stroke-width="1.0"/><path d="M1.1 7.6 H7.2" stroke="#2f74d0" stroke-width="1.1" stroke-linecap="round"/><path d="M1.2 7.8 L2.7 6.4 V7.8 Z M7.1 7.8 L5.9 6.4 V7.8 Z" fill="#2f74d0"/><path d="M4.25 7.6 V12.6" stroke="#2f74d0" stroke-width="0.95"/></svg>
</div>
<div class="b" style="left:29.50px;top:16.60px">
<svg class="b" style="left:0.00px;top:0.00px" width="14" height="11" viewBox="0 0 14 11"><rect x="1.05" y="1.25" width="11.8" height="8.9" rx="1.5" fill="none" stroke="#2f74d0" stroke-width="1.1"/><path d="M1.0 4.5 H12.9" stroke="#2f74d0" stroke-width="1.0"/><path d="M3.3 0.5 V2.2 M10.1 0.5 V2.2" stroke="#2f74d0" stroke-width="1.3" stroke-linecap="round"/><path d="M5.0 7.0 L6.95 5.6 L8.9 7.0 L6.95 8.4 Z" fill="#2f74d0"/><path d="M6.95 6 V9.2" stroke="#2f74d0" stroke-width="0.8"/></svg>
</div>
<div class="t" style="left:58.90px;top:62px;font-size:9.3px;line-height:12.09px;color:#3c3c3c;font-weight:normal;transform:scaleX(0.9100);">Module 30 - C23:</div>
<div class="t" style="left:58.90px;top:77px;font-size:9.3px;line-height:12.09px;color:#3c3c3c;font-weight:normal;transform:scaleX(0.9100);">Cross Brace Assembly</div>
<div class="t" style="left:156.10px;top:47px;font-size:9.3px;line-height:12.09px;color:#3c3c3c;font-weight:normal;transform:scaleX(0.9100);">Module 30 -</div>
<div class="t" style="left:156.10px;top:62px;font-size:9.3px;line-height:12.09px;color:#3c3c3c;font-weight:normal;transform:scaleX(0.9100);">C23: Cross</div>
<div class="t" style="left:156.10px;top:77px;font-size:9.3px;line-height:12.09px;color:#3c3c3c;font-weight:normal;transform:scaleX(0.9100);">Brace</div>
<div class="t" style="left:156.10px;top:92px;font-size:9.3px;line-height:12.09px;color:#3c3c3c;font-weight:normal;transform:scaleX(0.9100);">Assembly</div>
<div class="t" style="left:221.30px;top:70px;font-size:9.3px;line-height:12.09px;color:#3c3c3c;font-weight:normal;transform:scaleX(0.9100);">0.25816</div>
<div class="t" style="left:286.60px;top:70px;font-size:9.3px;line-height:12.09px;color:#3c3c3c;font-weight:normal;transform:scaleX(0.9100);">Ton</div>
<div class="t" style="left:326.00px;top:70px;font-size:9.3px;line-height:12.09px;color:#3c3c3c;font-weight:normal;transform:scaleX(0.9100);">1005</div>
<div class="t" style="left:442.60px;top:70px;font-size:9.3px;line-height:12.09px;color:#3c3c3c;font-weight:normal;transform:scaleX(0.9100);">20.00000</div>
<div class="t" style="left:507.60px;top:70px;font-size:9.3px;line-height:12.09px;color:#3c3c3c;font-weight:normal;transform:scaleX(0.9100);">5.16320</div>
<div class="t" style="left:573.20px;top:70px;font-size:9.3px;line-height:12.09px;color:#3c3c3c;font-weight:normal;transform:scaleX(0.9100);">20.00000</div>
<div class="t" style="left:637.60px;top:70px;font-size:9.3px;line-height:12.09px;color:#3c3c3c;font-weight:normal;transform:scaleX(0.9100);">5.16320</div>
<div class="t" style="left:703.20px;top:70px;font-size:9.3px;line-height:12.09px;color:#3c3c3c;font-weight:normal;transform:scaleX(0.9100);">Metals</div>
<div class="b" style="left:6.20px;top:68.60px">
<svg class="b" style="left:0.00px;top:0.00px" width="9" height="13" viewBox="0 0 9 13"><path d="M2.2 7.6 V2.0 Q2.2 0.75 3.45 0.75 H5.15 Q6.4 0.75 6.4 2.0 V7.6" fill="none" stroke="#2f74d0" stroke-width="1.0"/><path d="M1.1 7.6 H7.2" stroke="#2f74d0" stroke-width="1.1" stroke-linecap="round"/><path d="M1.2 7.8 L2.7 6.4 V7.8 Z M7.1 7.8 L5.9 6.4 V7.8 Z" fill="#2f74d0"/><path d="M4.25 7.6 V12.6" stroke="#2f74d0" stroke-width="0.95"/></svg>
</div>
<div class="b" style="left:29.50px;top:69.60px">
<svg class="b" style="left:0.00px;top:0.00px" width="14" height="11" viewBox="0 0 14 11"><rect x="1.05" y="1.25" width="11.8" height="8.9" rx="1.5" fill="none" stroke="#2f74d0" stroke-width="1.1"/><path d="M1.0 4.5 H12.9" stroke="#2f74d0" stroke-width="1.0"/><path d="M3.3 0.5 V2.2 M10.1 0.5 V2.2" stroke="#2f74d0" stroke-width="1.3" stroke-linecap="round"/><path d="M5.0 7.0 L6.95 5.6 L8.9 7.0 L6.95 8.4 Z" fill="#2f74d0"/><path d="M6.95 6 V9.2" stroke="#2f74d0" stroke-width="0.8"/></svg>
</div>
<div class="t" style="left:58.90px;top:123px;font-size:9.3px;line-height:12.09px;color:#3c3c3c;font-weight:normal;transform:scaleX(0.9100);">Module 30 - C24:</div>
<div class="t" style="left:58.90px;top:138px;font-size:9.3px;line-height:12.09px;color:#3c3c3c;font-weight:normal;transform:scaleX(0.9100);">Cross Brace Assembly</div>
<div class="t" style="left:156.10px;top:108px;font-size:9.3px;line-height:12.09px;color:#3c3c3c;font-weight:normal;transform:scaleX(0.9100);">Module 30 -</div>
<div class="t" style="left:156.10px;top:123px;font-size:9.3px;line-height:12.09px;color:#3c3c3c;font-weight:normal;transform:scaleX(0.9100);">C24: Cross</div>
<div class="t" style="left:156.10px;top:138px;font-size:9.3px;line-height:12.09px;color:#3c3c3c;font-weight:normal;transform:scaleX(0.9100);">Brace</div>
<div class="t" style="left:156.10px;top:153px;font-size:9.3px;line-height:12.09px;color:#3c3c3c;font-weight:normal;transform:scaleX(0.9100);">Assembly</div>
<div class="t" style="left:221.30px;top:131px;font-size:9.3px;line-height:12.09px;color:#3c3c3c;font-weight:normal;transform:scaleX(0.9100);">0.14000</div>
<div class="t" style="left:286.60px;top:131px;font-size:9.3px;line-height:12.09px;color:#3c3c3c;font-weight:normal;transform:scaleX(0.9100);">Ton</div>
<div class="t" style="left:326.00px;top:131px;font-size:9.3px;line-height:12.09px;color:#3c3c3c;font-weight:normal;transform:scaleX(0.9100);">1005</div>
<div class="t" style="left:442.60px;top:131px;font-size:9.3px;line-height:12.09px;color:#3c3c3c;font-weight:normal;transform:scaleX(0.9100);">20.00000</div>
<div class="t" style="left:507.60px;top:131px;font-size:9.3px;line-height:12.09px;color:#3c3c3c;font-weight:normal;transform:scaleX(0.9100);">2.80000</div>
<div class="t" style="left:573.20px;top:131px;font-size:9.3px;line-height:12.09px;color:#3c3c3c;font-weight:normal;transform:scaleX(0.9100);">20.00000</div>
<div class="t" style="left:637.60px;top:131px;font-size:9.3px;line-height:12.09px;color:#3c3c3c;font-weight:normal;transform:scaleX(0.9100);">2.80000</div>
<div class="t" style="left:703.20px;top:131px;font-size:9.3px;line-height:12.09px;color:#3c3c3c;font-weight:normal;transform:scaleX(0.9100);">Metals</div>
<div class="b" style="left:6.20px;top:129.60px">
<svg class="b" style="left:0.00px;top:0.00px" width="9" height="13" viewBox="0 0 9 13"><path d="M2.2 7.6 V2.0 Q2.2 0.75 3.45 0.75 H5.15 Q6.4 0.75 6.4 2.0 V7.6" fill="none" stroke="#2f74d0" stroke-width="1.0"/><path d="M1.1 7.6 H7.2" stroke="#2f74d0" stroke-width="1.1" stroke-linecap="round"/><path d="M1.2 7.8 L2.7 6.4 V7.8 Z M7.1 7.8 L5.9 6.4 V7.8 Z" fill="#2f74d0"/><path d="M4.25 7.6 V12.6" stroke="#2f74d0" stroke-width="0.95"/></svg>
</div>
<div class="b" style="left:29.50px;top:130.60px">
<svg class="b" style="left:0.00px;top:0.00px" width="14" height="11" viewBox="0 0 14 11"><rect x="1.05" y="1.25" width="11.8" height="8.9" rx="1.5" fill="none" stroke="#2f74d0" stroke-width="1.1"/><path d="M1.0 4.5 H12.9" stroke="#2f74d0" stroke-width="1.0"/><path d="M3.3 0.5 V2.2 M10.1 0.5 V2.2" stroke="#2f74d0" stroke-width="1.3" stroke-linecap="round"/><path d="M5.0 7.0 L6.95 5.6 L8.9 7.0 L6.95 8.4 Z" fill="#2f74d0"/><path d="M6.95 6 V9.2" stroke="#2f74d0" stroke-width="0.8"/></svg>
</div>
<div class="t" style="left:58.90px;top:184px;font-size:9.3px;line-height:12.09px;color:#3c3c3c;font-weight:normal;transform:scaleX(0.9100);">Module 30 - B24:</div>
<div class="t" style="left:58.90px;top:199px;font-size:9.3px;line-height:12.09px;color:#3c3c3c;font-weight:normal;transform:scaleX(0.9100);">Cross Brace Assembly</div>
<div class="t" style="left:156.10px;top:169px;font-size:9.3px;line-height:12.09px;color:#3c3c3c;font-weight:normal;transform:scaleX(0.9100);">Module 30 -</div>
<div class="t" style="left:156.10px;top:184px;font-size:9.3px;line-height:12.09px;color:#3c3c3c;font-weight:normal;transform:scaleX(0.9100);">B24: Cross</div>
<div class="t" style="left:156.10px;top:199px;font-size:9.3px;line-height:12.09px;color:#3c3c3c;font-weight:normal;transform:scaleX(0.9100);">Brace</div>
<div class="t" style="left:156.10px;top:214px;font-size:9.3px;line-height:12.09px;color:#3c3c3c;font-weight:normal;transform:scaleX(0.9100);">Assembly</div>
<div class="t" style="left:221.30px;top:191px;font-size:9.3px;line-height:12.09px;color:#3c3c3c;font-weight:normal;transform:scaleX(0.9100);">0.15000</div>
<div class="t" style="left:286.60px;top:191px;font-size:9.3px;line-height:12.09px;color:#3c3c3c;font-weight:normal;transform:scaleX(0.9100);">Ton</div>
<div class="t" style="left:326.00px;top:191px;font-size:9.3px;line-height:12.09px;color:#3c3c3c;font-weight:normal;transform:scaleX(0.9100);">1005</div>
<div class="t" style="left:442.60px;top:191px;font-size:9.3px;line-height:12.09px;color:#3c3c3c;font-weight:normal;transform:scaleX(0.9100);">20.00000</div>
<div class="t" style="left:507.60px;top:191px;font-size:9.3px;line-height:12.09px;color:#3c3c3c;font-weight:normal;transform:scaleX(0.9100);">3.00000</div>
<div class="t" style="left:573.20px;top:191px;font-size:9.3px;line-height:12.09px;color:#3c3c3c;font-weight:normal;transform:scaleX(0.9100);">20.00000</div>
<div class="t" style="left:637.60px;top:191px;font-size:9.3px;line-height:12.09px;color:#3c3c3c;font-weight:normal;transform:scaleX(0.9100);">3.00000</div>
<div class="t" style="left:703.20px;top:191px;font-size:9.3px;line-height:12.09px;color:#3c3c3c;font-weight:normal;transform:scaleX(0.9100);">Metals</div>
<div class="b" style="left:6.20px;top:191.10px">
<svg class="b" style="left:0.00px;top:0.00px" width="9" height="13" viewBox="0 0 9 13"><path d="M2.2 7.6 V2.0 Q2.2 0.75 3.45 0.75 H5.15 Q6.4 0.75 6.4 2.0 V7.6" fill="none" stroke="#2f74d0" stroke-width="1.0"/><path d="M1.1 7.6 H7.2" stroke="#2f74d0" stroke-width="1.1" stroke-linecap="round"/><path d="M1.2 7.8 L2.7 6.4 V7.8 Z M7.1 7.8 L5.9 6.4 V7.8 Z" fill="#2f74d0"/><path d="M4.25 7.6 V12.6" stroke="#2f74d0" stroke-width="0.95"/></svg>
</div>
<div class="b" style="left:29.50px;top:192.10px">
<svg class="b" style="left:0.00px;top:0.00px" width="14" height="11" viewBox="0 0 14 11"><rect x="1.05" y="1.25" width="11.8" height="8.9" rx="1.5" fill="none" stroke="#2f74d0" stroke-width="1.1"/><path d="M1.0 4.5 H12.9" stroke="#2f74d0" stroke-width="1.0"/><path d="M3.3 0.5 V2.2 M10.1 0.5 V2.2" stroke="#2f74d0" stroke-width="1.3" stroke-linecap="round"/><path d="M5.0 7.0 L6.95 5.6 L8.9 7.0 L6.95 8.4 Z" fill="#2f74d0"/><path d="M6.95 6 V9.2" stroke="#2f74d0" stroke-width="0.8"/></svg>
</div>
</div>
<div class="b" style="left:165.00px;top:396.00px;width:800.00px;height:6.80px;background:#fff;"></div>
<svg class="b" style="left:169.6px;top:396.6px" width="5" height="6" viewBox="0 0 5 6"><path d="M0.3 3 L4.4 0.3 V5.7 Z" fill="#7a7a7a"/></svg>
<div class="b" style="left:177.60px;top:397.00px;width:800.00px;height:4.00px;border-radius:2px;background:#7b7b7b;"></div>
<div class="b" style="left:165.00px;top:402.80px;width:800.00px;height:1.00px;background:#e6e6e6;"></div>
<div class="b" style="left:165.00px;top:167.00px;width:1.00px;height:236.00px;background:#e6e6e6;"></div>
<div class="b" style="left:165.00px;top:438.50px;width:800.00px;height:1.00px;background:#ececec;"></div>
<div class="b" style="left:166.00px;top:440.10px;width:800.00px;height:21.80px;background:#4c5859;"></div>
<div class="b" style="left:166.00px;top:440.00px;width:800.00px;height:1.00px;background:#3f4a4b;"></div>
<div class="t" style="left:169.40px;top:444px;font-size:11.9px;line-height:15.47px;color:#fff;font-weight:normal;transform:scaleX(0.9000);-webkit-text-stroke:0.25px #fff;">Labor</div>
<div class="t" style="left:517.90px;top:445px;font-size:9.9px;line-height:12.87px;color:#fff;font-weight:normal;transform:scaleX(0.8638);-webkit-text-stroke:0.25px #fff;">Planning status:</div>
<div class="b" style="left:583.00px;top:442.40px;width:100.00px;height:16.30px;background:#fff;"></div>
<div class="t" style="left:586.90px;top:445px;font-size:9.4px;line-height:12.22px;color:#333;font-weight:normal;transform:scaleX(0.9000);">Started</div>
<svg class="b" style="left:667.8px;top:446.9px" width="7" height="5" viewBox="0 0 7 5"><path d="M0 0 H6.5 L3.25 4.7 Z" fill="#8d8d8d"/></svg>
<svg class="b" style="left:798.60px;top:443.70px" width="12.5" height="12.5" viewBox="0 0 12.5 12.5"><circle cx="6.25" cy="6.25" r="5.4" fill="none" stroke="#fff" stroke-width="1.5"/><path d="M6.25 3.1 V9.4 M3.1 6.25 H9.4" stroke="#fff" stroke-width="1.8"/></svg>
<div class="t" style="left:816.80px;top:446px;font-size:8.9px;line-height:11.57px;color:#fff;font-weight:bold;transform:scaleX(0.8644);">Add labor</div>
<svg class="b" style="left:855.00px;top:443.70px" width="12.5" height="12.5" viewBox="0 0 12.5 12.5"><circle cx="6.25" cy="6.25" r="5.4" fill="none" stroke="#fff" stroke-width="1.5"/><path d="M6.25 3.1 V9.4 M3.1 6.25 H9.4" stroke="#fff" stroke-width="1.8"/></svg>
<div class="t" style="left:871.40px;top:446px;font-size:8.9px;line-height:11.57px;color:#fff;font-weight:bold;transform:scaleX(0.8400);">Add labor from</div>
<div class="b" style="left:165.00px;top:462.60px;width:800.00px;height:25.40px;background:#f0f0f0;"></div>
<div class="b" style="left:165.00px;top:488.00px;width:800.00px;height:1.00px;background:#e8e8e8;"></div>
<div class="b" style="left:165.00px;top:462.60px;width:1.00px;height:25.40px;background:#e3e3e3;"></div>
<div class="b" style="left:165.00px;top:489.00px;width:1.00px;height:73.00px;background:#f1f1f1;"></div>
<div class="b" style="left:184.00px;top:462.60px;width:2.00px;height:25.40px;background:#d6d6d6;"></div>
<div class="b" style="left:186.00px;top:462.60px;width:1.00px;height:25.40px;background:#fafafa;"></div>
<div class="b" style="left:184.00px;top:489.00px;width:1.00px;height:73.00px;background:#f1f1f1;"></div>
<div class="b" style="left:217.00px;top:462.60px;width:2.00px;height:25.40px;background:#d6d6d6;"></div>
<div class="b" style="left:219.00px;top:462.60px;width:1.00px;height:25.40px;background:#fafafa;"></div>
<div class="b" style="left:217.00px;top:489.00px;width:1.00px;height:73.00px;background:#f1f1f1;"></div>
<div class="b" style="left:348.00px;top:462.60px;width:1.00px;height:25.40px;background:#e3e3e3;"></div>
<div class="b" style="left:348.00px;top:489.00px;width:1.00px;height:73.00px;background:#f1f1f1;"></div>
<div class="b" style="left:478.00px;top:462.60px;width:1.00px;height:25.40px;background:#e3e3e3;"></div>
<div class="b" style="left:478.00px;top:489.00px;width:1.00px;height:73.00px;background:#f1f1f1;"></div>
<div class="b" style="left:608.00px;top:462.60px;width:1.00px;height:25.40px;background:#e3e3e3;"></div>
<div class="b" style="left:608.00px;top:489.00px;width:1.00px;height:73.00px;background:#f1f1f1;"></div>
<div class="b" style="left:739.00px;top:462.60px;width:1.00px;height:25.40px;background:#e3e3e3;"></div>
<div class="b" style="left:739.00px;top:489.00px;width:1.00px;height:73.00px;background:#f1f1f1;"></div>
<div class="b" style="left:869.00px;top:462.60px;width:1.00px;height:25.40px;background:#e3e3e3;"></div>
<div class="b" style="left:869.00px;top:489.00px;width:1.00px;height:73.00px;background:#f1f1f1;"></div>
<div class="b" style="left:165.00px;top:511.00px;width:800.00px;height:1.00px;background:#f0f0f0;"></div>
<div class="b" style="left:165.00px;top:534.00px;width:800.00px;height:1.00px;background:#f0f0f0;"></div>
<div class="b" style="left:165.00px;top:556.00px;width:800.00px;height:1.00px;background:#f0f0f0;"></div>
<div class="t" style="left:222.90px;top:470px;font-size:8.8px;line-height:11.44px;color:#262626;font-weight:bold;transform:scaleX(0.8300);">Trade</div>
<svg class="b" style="left:333.80px;top:471.40px" width="10" height="8" viewBox="0 0 10 8"><path d="M0 0.7 H9.6 M1.6 3.9 H8 M3.2 7.1 H6.4" stroke="#e0e0e0" stroke-width="1.1"/></svg>
<div class="t" style="left:353.90px;top:470px;font-size:8.8px;line-height:11.44px;color:#262626;font-weight:bold;transform:scaleX(0.8300);">Craft level</div>
<svg class="b" style="left:463.80px;top:471.40px" width="10" height="8" viewBox="0 0 10 8"><path d="M0 0.7 H9.6 M1.6 3.9 H8 M3.2 7.1 H6.4" stroke="#e0e0e0" stroke-width="1.1"/></svg>
<div class="t" style="left:483.90px;top:470px;font-size:8.8px;line-height:11.44px;color:#262626;font-weight:bold;transform:scaleX(0.8300);">Code</div>
<div class="t" style="left:613.90px;top:470px;font-size:8.8px;line-height:11.44px;color:#262626;font-weight:bold;transform:scaleX(0.8300);">Description</div>
<div class="t" style="left:744.90px;top:470px;font-size:8.8px;line-height:11.44px;color:#262626;font-weight:bold;transform:scaleX(0.8300);">Quantity</div>
<svg class="b" style="left:854.80px;top:471.40px" width="10" height="8" viewBox="0 0 10 8"><path d="M0 0.7 H9.6 M1.6 3.9 H8 M3.2 7.1 H6.4" stroke="#e0e0e0" stroke-width="1.1"/></svg>
<div class="t" style="left:874.90px;top:470px;font-size:8.8px;line-height:11.44px;color:#262626;font-weight:bold;transform:scaleX(0.8300);">Employee ID</div>
<div class="t" style="left:223.60px;top:494px;font-size:9.3px;line-height:12.09px;color:#3c3c3c;font-weight:normal;transform:scaleX(0.9100);">Iron Worker</div>
<div class="t" style="left:354.00px;top:494px;font-size:9.3px;line-height:12.09px;color:#3c3c3c;font-weight:normal;transform:scaleX(0.9128);">Iron Worker (Structural)</div>
<div class="t" style="left:744.20px;top:494px;font-size:9.3px;line-height:12.09px;color:#3c3c3c;font-weight:normal;transform:scaleX(0.9100);">1.00000</div>
<div class="t" style="left:874.20px;top:494px;font-size:9.3px;line-height:12.09px;color:#3c3c3c;font-weight:normal;transform:scaleX(0.9100);">00240641</div>
<svg class="b" style="left:171.20px;top:493.20px" width="9" height="13" viewBox="0 0 9 13"><path d="M2.2 7.6 V2.0 Q2.2 0.75 3.45 0.75 H5.15 Q6.4 0.75 6.4 2.0 V7.6" fill="none" stroke="#2f74d0" stroke-width="1.0"/><path d="M1.1 7.6 H7.2" stroke="#2f74d0" stroke-width="1.1" stroke-linecap="round"/><path d="M1.2 7.8 L2.7 6.4 V7.8 Z M7.1 7.8 L5.9 6.4 V7.8 Z" fill="#2f74d0"/><path d="M4.25 7.6 V12.6" stroke="#2f74d0" stroke-width="0.95"/></svg>
<svg class="b" style="left:194.50px;top:494.40px" width="14" height="11" viewBox="0 0 14 11"><rect x="1.05" y="1.25" width="11.8" height="8.9" rx="1.5" fill="none" stroke="#2f74d0" stroke-width="1.1"/><path d="M1.0 4.5 H12.9" stroke="#2f74d0" stroke-width="1.0"/><path d="M3.3 0.5 V2.2 M10.1 0.5 V2.2" stroke="#2f74d0" stroke-width="1.3" stroke-linecap="round"/><path d="M5.0 7.0 L6.95 5.6 L8.9 7.0 L6.95 8.4 Z" fill="#2f74d0"/><path d="M6.95 6 V9.2" stroke="#2f74d0" stroke-width="0.8"/></svg>
<div class="t" style="left:223.60px;top:516px;font-size:9.3px;line-height:12.09px;color:#3c3c3c;font-weight:normal;transform:scaleX(0.9100);">Iron Worker</div>
<div class="t" style="left:354.00px;top:516px;font-size:9.3px;line-height:12.09px;color:#3c3c3c;font-weight:normal;transform:scaleX(0.9128);">Iron Worker (Structural)</div>
<div class="t" style="left:744.20px;top:516px;font-size:9.3px;line-height:12.09px;color:#3c3c3c;font-weight:normal;transform:scaleX(0.9100);">1.00000</div>
<div class="t" style="left:874.20px;top:516px;font-size:9.3px;line-height:12.09px;color:#3c3c3c;font-weight:normal;transform:scaleX(0.9100);">00240370</div>
<svg class="b" style="left:171.20px;top:515.70px" width="9" height="13" viewBox="0 0 9 13"><path d="M2.2 7.6 V2.0 Q2.2 0.75 3.45 0.75 H5.15 Q6.4 0.75 6.4 2.0 V7.6" fill="none" stroke="#2f74d0" stroke-width="1.0"/><path d="M1.1 7.6 H7.2" stroke="#2f74d0" stroke-width="1.1" stroke-linecap="round"/><path d="M1.2 7.8 L2.7 6.4 V7.8 Z M7.1 7.8 L5.9 6.4 V7.8 Z" fill="#2f74d0"/><path d="M4.25 7.6 V12.6" stroke="#2f74d0" stroke-width="0.95"/></svg>
<svg class="b" style="left:194.50px;top:516.90px" width="14" height="11" viewBox="0 0 14 11"><rect x="1.05" y="1.25" width="11.8" height="8.9" rx="1.5" fill="none" stroke="#2f74d0" stroke-width="1.1"/><path d="M1.0 4.5 H12.9" stroke="#2f74d0" stroke-width="1.0"/><path d="M3.3 0.5 V2.2 M10.1 0.5 V2.2" stroke="#2f74d0" stroke-width="1.3" stroke-linecap="round"/><path d="M5.0 7.0 L6.95 5.6 L8.9 7.0 L6.95 8.4 Z" fill="#2f74d0"/><path d="M6.95 6 V9.2" stroke="#2f74d0" stroke-width="0.8"/></svg>
<div class="t" style="left:223.60px;top:539px;font-size:9.3px;line-height:12.09px;color:#3c3c3c;font-weight:normal;transform:scaleX(0.9100);">Laborers</div>
<div class="t" style="left:354.00px;top:539px;font-size:9.3px;line-height:12.09px;color:#3c3c3c;font-weight:normal;transform:scaleX(0.9116);">Laborer Journeyman</div>
<div class="t" style="left:744.20px;top:539px;font-size:9.3px;line-height:12.09px;color:#3c3c3c;font-weight:normal;transform:scaleX(0.9100);">1.00000</div>
<div class="t" style="left:874.20px;top:539px;font-size:9.3px;line-height:12.09px;color:#3c3c3c;font-weight:normal;transform:scaleX(0.9100);">00364112</div>
<svg class="b" style="left:171.20px;top:538.20px" width="9" height="13" viewBox="0 0 9 13"><path d="M2.2 7.6 V2.0 Q2.2 0.75 3.45 0.75 H5.15 Q6.4 0.75 6.4 2.0 V7.6" fill="none" stroke="#2f74d0" stroke-width="1.0"/><path d="M1.1 7.6 H7.2" stroke="#2f74d0" stroke-width="1.1" stroke-linecap="round"/><path d="M1.2 7.8 L2.7 6.4 V7.8 Z M7.1 7.8 L5.9 6.4 V7.8 Z" fill="#2f74d0"/><path d="M4.25 7.6 V12.6" stroke="#2f74d0" stroke-width="0.95"/></svg>
<svg class="b" style="left:194.50px;top:539.40px" width="14" height="11" viewBox="0 0 14 11"><rect x="1.05" y="1.25" width="11.8" height="8.9" rx="1.5" fill="none" stroke="#2f74d0" stroke-width="1.1"/><path d="M1.0 4.5 H12.9" stroke="#2f74d0" stroke-width="1.0"/><path d="M3.3 0.5 V2.2 M10.1 0.5 V2.2" stroke="#2f74d0" stroke-width="1.3" stroke-linecap="round"/><path d="M5.0 7.0 L6.95 5.6 L8.9 7.0 L6.95 8.4 Z" fill="#2f74d0"/><path d="M6.95 6 V9.2" stroke="#2f74d0" stroke-width="0.8"/></svg>
<div class="b" style="left:25.00px;top:567.80px;width:900.00px;height:21.60px;background:#efefef;"></div>
<div class="b" style="left:25.00px;top:567.60px;width:900.00px;height:1.00px;background:#e0e0e0;"></div>
<div class="b" style="left:25.00px;top:588.40px;width:891.00px;height:1.00px;background:linear-gradient(90deg,rgba(255,255,255,0) 0%,rgba(255,255,255,0) 50%,rgba(255,255,255,0.9) 70%,#fff 100%);"></div>
<div class="b" style="left:25.00px;top:589.40px;width:891.00px;height:1.00px;background:linear-gradient(90deg,rgba(60,80,105,0) 0%,rgba(60,80,105,0) 50%,rgba(60,80,105,0.8) 70%,#3c5069 100%);"></div>
<div class="t" style="left:34.70px;top:574px;font-size:8.1px;line-height:10.53px;color:#5c5c5c;font-weight:normal;transform:scaleX(0.9121);">© 2024 InEight Inc.</div>
<div class="t" style="left:119.00px;top:574px;font-size:8.1px;line-height:10.53px;color:#555;font-weight:normal;transform:scaleX(0.8968);text-decoration:underline;">Privacy Statement</div>
<div class="t" style="left:202.40px;top:574px;font-size:8.1px;line-height:10.53px;color:#555;font-weight:normal;transform:scaleX(0.8921);text-decoration:underline;">Terms &amp; Conditions</div>
<div class="t" style="left:286.30px;top:574px;font-size:8.1px;line-height:10.53px;color:#555;font-weight:normal;transform:scaleX(0.8935);text-decoration:underline;">v 24.9</div>
<div class="b" style="left:108.40px;top:574.50px;width:0.90px;height:11.00px;background:#c6c6c6;"></div>
<div class="b" style="left:192.00px;top:574.50px;width:0.90px;height:11.00px;background:#c6c6c6;"></div>
<div class="b" style="left:276.20px;top:574.50px;width:0.90px;height:11.00px;background:#c6c6c6;"></div>
<div class="b" style="left:155.00px;top:80.00px;width:1.00px;height:488.00px;background:#e8e8e8;"></div>
<div class="b" style="left:156.00px;top:80.00px;width:3.00px;height:488.00px;background:linear-gradient(90deg,rgba(0,0,0,0.05),rgba(0,0,0,0));"></div>
</div>
</body></html>
